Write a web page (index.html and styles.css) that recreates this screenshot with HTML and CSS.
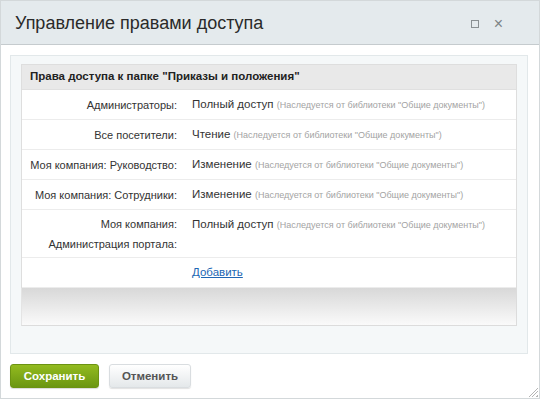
FILE: index.html
```html
<!DOCTYPE html>
<html>
  <head>
    <title>Управление правами доступа</title>
    <link rel="stylesheet" href="styles.css">
  </head>
  <body>
    <div class="dialog">
      <div class="dialog-head">
        <span class="dialog-title">Управление правами доступа</span>
        <div class="dialog-icons">
          <span class="icon-max"></span>
          <span class="icon-close">&times;</span>
        </div>
      </div>

      <div class="dialog-body">
        <div class="panel">
          <div class="rights">
            <div class="rights-title">Права доступа к папке "Приказы и положения"</div>
            <div class="row">
              <div class="who">Администраторы:</div>
              <div class="what">Полный доступ <span class="hint">(Наследуется от библиотеки "Общие документы")</span></div>
            </div>
            <div class="row">
              <div class="who">Все посетители:</div>
              <div class="what">Чтение <span class="hint">(Наследуется от библиотеки "Общие документы")</span></div>
            </div>
            <div class="row">
              <div class="who">Моя компания: Руководство:</div>
              <div class="what">Изменение <span class="hint">(Наследуется от библиотеки "Общие документы")</span></div>
            </div>
            <div class="row">
              <div class="who">Моя компания: Сотрудники:</div>
              <div class="what">Изменение <span class="hint">(Наследуется от библиотеки "Общие документы")</span></div>
            </div>
            <div class="row row-tall">
              <div class="who">Моя компания:<br>Администрация портала:</div>
              <div class="what">Полный доступ <span class="hint">(Наследуется от библиотеки "Общие документы")</span></div>
            </div>
            <div class="row">
              <div class="who"></div>
              <div class="what"><a href="#" class="add-link">Добавить</a></div>
            </div>
          </div>
          <div class="panel-foot"></div>
        </div>
      </div>

      <div class="dialog-buttons">
        <button class="btn btn-save">Сохранить</button>
        <button class="btn btn-cancel">Отменить</button>
      </div>
      <span class="resize-grip"></span>
    </div>
  </body>
</html>
```

FILE: styles.css
```css
/* Dialog frame */
html, body {
  margin: 0;
  padding: 0;
}

body {
  font-family: "Liberation Sans", Arial, sans-serif;
  color: #333;
  background: #fff;
}

.dialog {
  position: relative;
  box-sizing: border-box;
  width: 540px;
  height: 399px;
  border: 1px solid #d3d8da;
  background: #fff;
}

.dialog-head {
  display: flex;
  align-items: center;
  justify-content: space-between;
  height: 43px;
  padding: 0 36px 0 14px;
  background: #e4eaed;
  border-bottom: 1px solid #c5cbce;
}

.dialog-title {
  font-size: 18px;
  color: #2a2a2a;
  padding-top: 1px;
}

.dialog-icons {
  display: flex;
  align-items: center;
  gap: 15px;
  padding-top: 2px;
}

.icon-max {
  display: block;
  width: 6px;
  height: 6px;
  border: 1px solid #8a9093;
}

.icon-close {
  font-size: 16px;
  line-height: 14px;
  color: #7d8386;
}

/* Body */
.dialog-body {
  padding: 10px 11px 0 9px;
}

.panel {
  background: #f5f8f9;
  border: 1px solid #e2e8ea;
  padding: 8px 10px 27px 10px;
}

.rights {
  background: #fff;
  border: 1px solid #dedede;
  border-bottom: none;
}

.rights-title {
  height: 24px;
  line-height: 22px;
  padding-left: 8px;
  font-size: 11.5px;
  font-weight: bold;
  color: #222;
  background: #e9e9e9;
  border-bottom: 1px solid #e0e0e0;
}

.row {
  display: flex;
  height: 29px;
  border-bottom: 1px solid #ececec;
  font-size: 11.5px;
}

.row-tall {
  height: 47px;
}

.who {
  flex: none;
  width: 155px;
  padding-right: 15px;
  text-align: right;
  white-space: nowrap;
  font-size: 11px;
  line-height: 20px;
  padding-top: 5px;
  color: #333;
}

.row-tall .who {
  padding-top: 4px;
}

.what {
  padding-top: 5px;
  line-height: 19px;
  white-space: nowrap;
  color: #333;
}

.hint {
  font-size: 9px;
  color: #a3a3a3;
}

.add-link {
  color: #2066b3;
  text-decoration: underline;
}

.panel-foot {
  height: 37px;
  background: linear-gradient(#d8d8d8, #fafafa);
  border: 1px solid #dcdcdc;
  border-top: none;
  border-left-color: #e4e4e4;
}

/* Buttons */
.dialog-buttons {
  display: flex;
  gap: 10px;
  padding: 10px 0 0 9px;
}

.btn {
  height: 24px;
  border-radius: 3px;
  font-family: "Liberation Sans", Arial, sans-serif;
  font-size: 11.5px;
  font-weight: bold;
  cursor: pointer;
}

.btn-save {
  width: 89px;
  color: #fff;
  border: 1px solid #6c9312;
  background: linear-gradient(#93bb1f, #6b9612);
  box-shadow: 0 1px 1px rgba(0,0,0,0.15);
}

.btn-cancel {
  width: 82px;
  color: #555;
  border: 1px solid #d9dde0;
  background: linear-gradient(#ffffff, #e4e8ea);
  box-shadow: 0 1px 1px rgba(0,0,0,0.12);
}

.resize-grip {
  position: absolute;
  right: 1px;
  bottom: 1px;
  width: 9px;
  height: 9px;
  background: linear-gradient(135deg, transparent 45%, #b5b5b5 45%, #b5b5b5 52%, transparent 52%, transparent 65%, #b5b5b5 65%, #b5b5b5 72%, transparent 72%, transparent 85%, #b5b5b5 85%);
}
```
